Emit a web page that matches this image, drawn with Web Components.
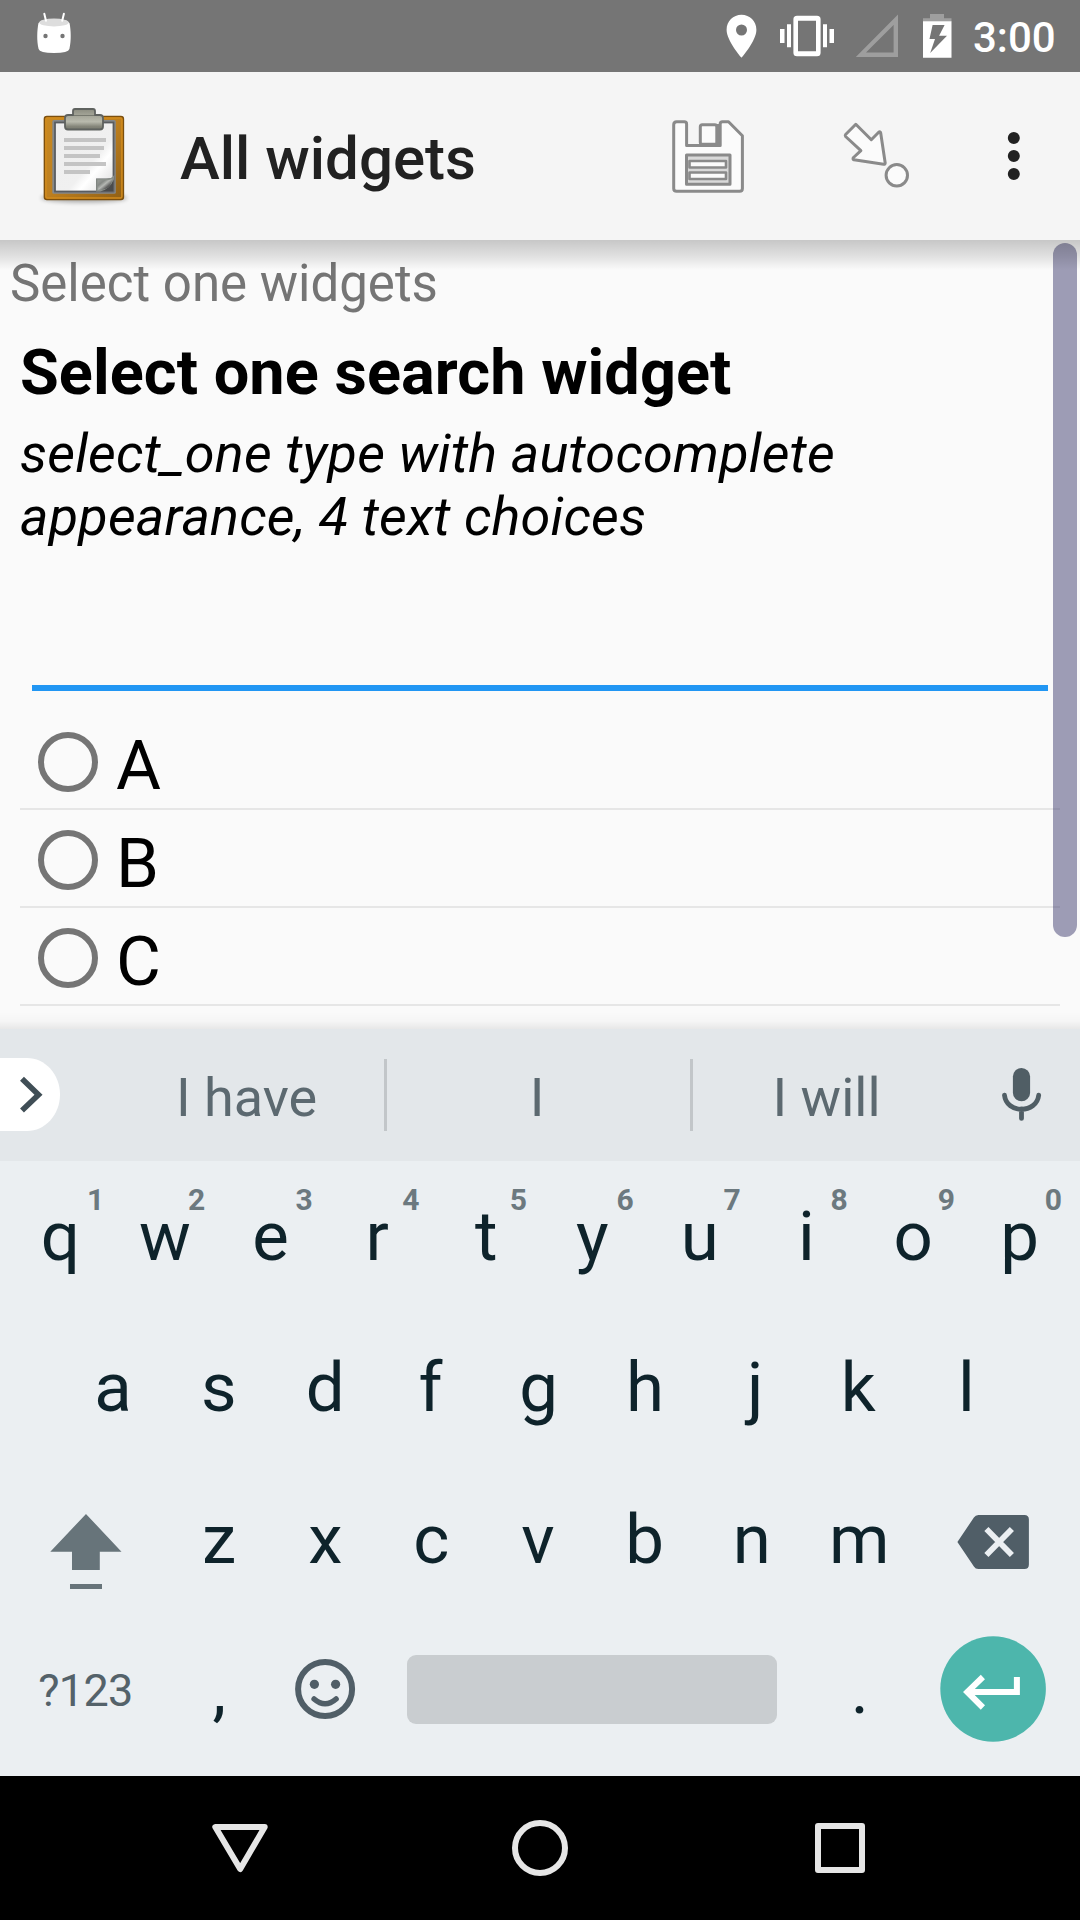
<!DOCTYPE html>
<html lang="en">
<head>
<meta charset="utf-8">
<title>All widgets</title>
<style>
html,body{margin:0;padding:0;background:#000}
body{width:1080px;height:1920px;overflow:hidden;font-family:Roboto,"Noto Sans",sans-serif}
</style>
</head>
<body>
<phone-screen>
  <status-bar slot="status" time="3:00"></status-bar>
  <app-bar slot="bar">All widgets</app-bar>
  <form-page slot="page" group="Select one widgets">
    <span slot="question">Select one search widget</span>
    <span slot="hint">select_one type with autocomplete appearance, 4 text choices</span>
    <radio-choice>A</radio-choice>
    <radio-choice>B</radio-choice>
    <radio-choice>C</radio-choice>
  </form-page>
  <suggestion-strip slot="strip">
    <span slot="first">I have</span><span slot="second">I</span><span slot="third">I will</span>
  </suggestion-strip>
  <soft-keyboard slot="keys"></soft-keyboard>
  <nav-bar slot="nav"></nav-bar>
</phone-screen>
<script>
const define = (name, html) => customElements.define(name, class extends HTMLElement {
  connectedCallback() {
    if (this.shadowRoot) return;
    const root = this.attachShadow({ mode: "open" });
    root.innerHTML = `<style>*{box-sizing:border-box}svg{display:block;flex:none}</style>` + (typeof html === "function" ? html(this) : html);
  }
});

define("phone-screen", `
<style>
:host{display:grid;grid-template-rows:72px 168px 789px 132px 615px 144px;width:1080px;height:1920px;overflow:hidden}
</style>
<slot name="status"></slot><slot name="bar"></slot><slot name="page"></slot><slot name="strip"></slot><slot name="keys"></slot><slot name="nav"></slot>`);

define("status-bar", el => `
<style>
:host{display:flex;background:#757575;color:#fff;height:72px}
.gap{flex:1}
.time{font-size:42px;font-weight:500;line-height:75px;width:107px}
</style>
<svg width="108" height="72" viewBox="0 0 108 72">
  <path d="M38.500 23C37 30 36.600 41 38.600 49Q39.500 52.900 54 52.900T69.400 49C71.400 41 71 30 69.500 23L66 20.500Q54 17.500 42 20.500Z" fill="#fff"/>
  <ellipse cx="54" cy="22.500" rx="14.800" ry="3.900" fill="#ddd"/>
  <path d="M44.300 13.700l1.700 7M63.900 13.700l-1.700 7" stroke="#fff" stroke-width="2" stroke-linecap="round"/>
  <circle cx="45.500" cy="36" r="2.200" fill="#757575"/><circle cx="62.500" cy="36" r="2.200" fill="#757575"/>
</svg>
<div class="gap"></div>
<svg width="253" height="72" viewBox="720 0 253 72">
  <path fill="#fff" fill-rule="evenodd" d="M741.500 14.800c-8.300 0-14.900 6.500-14.900 14.900 0 11.200 14.900 28 14.900 28s14.900-16.800 14.900-28c0-8.400-6.600-14.900-14.900-14.900zm0 9.700a5.500 5.500 0 1 1 0 11 5.500 5.500 0 0 1 0-11z"/>
  <path fill="#fff" fill-rule="evenodd" d="M780 29h4.500v14H780zM787 24.300h4v23h-4zM823 24.300h4v23h-4zM829.500 29h4.500v14h-4.500zM797 15.700h20a3.600 3.600 0 0 1 3.600 3.600v33.400a3.600 3.600 0 0 1-3.600 3.600h-20a3.600 3.600 0 0 1-3.600-3.600V19.300a3.600 3.600 0 0 1 3.600-3.600zm1 5v30.600h18V20.700z"/>
  <path fill="#9e9e9e" fill-rule="evenodd" d="M855.800 57L898 14.500V57zM866 52.600h27.600V25z"/>
  <path fill="#9e9e9e" d="M923 18.300h7V14h14v4.300h7.500v3.200H923z"/>
  <path fill="#fff" fill-rule="evenodd" d="M923 21.300h28.500v36.500H923zM932.600 25l-3.100 14h5.500l-4.800 14 16.800-17.300h-7.900L944.600 25z"/>
</svg>
<div class="time">${el.getAttribute("time")}</div>`);

define("app-bar", `
<style>
:host{display:flex;align-items:stretch;background:#f5f5f5;color:#212121;height:168px}
.title{width:479px;font-size:60px;font-weight:500;line-height:173px;white-space:nowrap}
</style>
<svg width="180" height="168" viewBox="0 72 180 168">
  <defs>
    <linearGradient id="board" x1="0" y1="0" x2="1" y2="1"><stop offset="0" stop-color="#c98a22"/><stop offset=".5" stop-color="#bd7f1f"/><stop offset="1" stop-color="#8f5f14"/></linearGradient>
    <linearGradient id="metal" x1="0" y1="0" x2="0" y2="1"><stop offset="0" stop-color="#8b8c80"/><stop offset=".3" stop-color="#a3a497"/><stop offset=".62" stop-color="#b9baad"/><stop offset=".85" stop-color="#85867a"/><stop offset="1" stop-color="#76776d"/></linearGradient>
    <linearGradient id="sheet" x1="0" y1="0" x2="1" y2="1"><stop offset="0" stop-color="#eee"/><stop offset=".6" stop-color="#f0f0f0"/><stop offset=".7" stop-color="#fff"/><stop offset="1" stop-color="#d8d8d8"/></linearGradient>
    <linearGradient id="curl" x1="0" y1="0" x2="1" y2="1"><stop offset="0" stop-color="#a9aca9"/><stop offset=".35" stop-color="#858985"/><stop offset=".5" stop-color="#b5b8b4"/><stop offset=".7" stop-color="#555"/></linearGradient>
    <filter id="soft" x="-20%" y="-100%" width="140%" height="300%"><feGaussianBlur stdDeviation="2"/></filter>
  </defs>
  <ellipse cx="84" cy="198" rx="43" ry="4.500" fill="#000" opacity=".3" filter="url(#soft)"/>
  <rect x="44.400" y="116.500" width="79" height="83" rx="2.500" fill="url(#board)" stroke="#7c4f0d" stroke-width="1.500"/>
  <rect x="45.900" y="118" width="76" height="80" rx="1.500" fill="none" stroke="#d18a1d" stroke-width="1.500"/>
  <rect x="52.300" y="120" width="63.500" height="73.700" rx="1.500" fill="#85888a"/>
  <rect x="55" y="122.500" width="58.500" height="69" fill="url(#sheet)" stroke="#5a5d60" stroke-width="1.800"/>
  <path d="M64 138h42v4H64zM64 146h40v4H64zM64 154h36v4H64zM64 162h42v4H64zM64 170h26v4H64z" fill="#c4c4c4"/>
  <path d="M96 178.500h11q5 0 7-2.500v16H96z" fill="#6d6f70"/>
  <path d="M97 179.500h8.500q6 0 8-2.500Q112 190 100 190.500H97z" fill="url(#curl)" stroke="#8a908a" stroke-width="1.300"/>
  <path d="M113.500 180v11.500h-13Q110 189 113.500 180z" fill="#4a4b4c"/>
  <path d="M73 115v-4q0-2 2-2h18q2 0 2 2v4h5q3 0 3 3v8.500q0 3-3 3H68q-3 0-3-3V118q0-3 3-3h5z" fill="url(#metal)" stroke="#5f625f" stroke-width="1.800"/>
  <path d="M74 115.500h20" stroke="#77796f" stroke-width="1"/>
</svg>
<div class="title"><slot></slot></div>
<svg width="421" height="168" viewBox="659 72 421 168">
  <g fill="#fbfbfb" stroke="#8a8a8a" stroke-width="3" stroke-linejoin="round">
    <path d="M676.700 121.800H684.300Q686.600 121.800 686.600 124V145.600H720.200V124Q720.200 121.800 722.500 121.800H728.500L742.400 135.800V188.500Q742.400 191.300 739.600 191.300H676.700Q673.700 191.300 673.700 188.500V124.800Q673.700 121.800 676.700 121.800Z"/>
    <path d="M718.300 124v21"/>
    <rect x="700.300" y="124.700" width="16.500" height="19.500" rx="2"/>
    <rect x="686.500" y="155" width="43.500" height="29.300" fill="#d9d9d9"/>
    <g stroke-width="2.600"><rect x="689.500" y="161" width="36.500" height="6.500"/><rect x="689.500" y="172.500" width="36.500" height="6.500"/></g>
    <path d="M855.800 124.300L871.300 139.700L878.700 132.200Q880.300 131 880.700 133L885.200 163Q885.200 164.600 883.600 164.300L854 159.800Q852.300 159 853.500 157.500L860.900 150.700L845.600 136.500Q844.900 135.300 845.600 134.500Z"/>
    <circle cx="896.800" cy="175.300" r="10.700"/>
  </g>
  <g fill="#212121"><circle cx="1013.800" cy="138" r="6"/><circle cx="1013.800" cy="156" r="6"/><circle cx="1013.800" cy="174" r="6"/></g>
</svg>`);

define("form-page", el => `
<style>
:host{display:block;position:relative;background:#fafafa;height:789px;overflow:hidden;color:#000}
.group{font-size:51px;line-height:60px;height:92px;padding:14px 0 0 10px;color:#757575;white-space:nowrap}
.body{padding:0 20px}
.question{font-size:63px;font-weight:700;line-height:74px;height:82px;padding-top:4px;letter-spacing:.06px;white-space:nowrap}
.hint{font-size:54px;font-style:italic;line-height:63px;height:144px;padding-top:8px;width:880px;letter-spacing:.18px}
.field{height:133px;margin:0 12px 21px;border-bottom:6px solid #2196f3}
.thumb{position:absolute;left:1053px;top:3px;width:24px;height:694px;border-radius:12px;background:rgba(64,62,112,.5)}
.top{position:absolute;left:0;right:0;top:0;height:30px;background:linear-gradient(rgba(0,0,0,.205),rgba(0,0,0,.10) 55%,rgba(0,0,0,0))}
.bottom{position:absolute;left:0;right:0;bottom:0;height:17px;background:linear-gradient(rgba(0,0,0,0),rgba(0,0,0,.02) 55%,rgba(0,0,0,.075))}
</style>
<div class="group">${el.getAttribute("group")}</div>
<div class="body">
  <div class="question"><slot name="question"></slot></div>
  <div class="hint"><slot name="hint"></slot></div>
  <div class="field"></div>
  <slot></slot>
</div>
<div class="thumb"></div><div class="top"></div><div class="bottom"></div>`);

define("radio-choice", `
<style>
:host{display:flex;align-items:center;box-sizing:border-box;height:98px;border-bottom:2px solid #e6e6e6;font-size:69px;line-height:84px}
i{width:60px;height:60px;border:6px solid #757575;border-radius:50%;margin:4px 18px 0}
span{padding-top:12px}
</style><i></i><span><slot></slot></span>`);

define("suggestion-strip", `
<style>
:host{display:flex;align-items:center;height:132px;background:#e3e7ea;color:#5c6970;font-size:54px}
.cell{line-height:120px;padding-top:6px;text-align:center;white-space:nowrap}
.rule{width:3px;height:72px;background:#c2c6c9}
</style>
<svg width="110" height="132" viewBox="0 1029 110 132">
  <path d="M0 1058H27C45 1058 60 1074 60 1094.500S45 1131 27 1131H0z" fill="#fff"/>
  <path d="M22 1078.700L38.500 1094.700L22 1110.500" fill="none" stroke="#404e56" stroke-width="5.600"/>
</svg>
<div class="cell" style="width:274px;padding-right:1px">
<slot name="first"></slot></div><div class="rule"></div>
<div class="cell" style="width:303px;padding-right:3px"><slot name="second"></slot></div><div class="rule"></div>
<div class="cell" style="width:267px"><slot name="third"></slot></div>
<svg width="120" height="132" viewBox="960 1029 120 132">
  <rect x="1012.900" y="1068" width="17.200" height="33.300" rx="8.600" fill="#505e65"/>
  <path d="M1004.500 1095.200C1006.500 1114 1036.500 1114 1038.700 1095.200M1021.500 1109v9.400" fill="none" stroke="#505e65" stroke-width="4.800" stroke-linecap="round"/>
</svg>`);

define("key-cap", el => `
<style>
:host{display:block;position:relative;flex:none;width:106.6px;height:100%;text-align:center;text-indent:${2 * (el.getAttribute("nudge") || 0)}px;font-size:69px;line-height:152px;color:#0e232b}
b{position:absolute;right:${14 - (el.getAttribute("alt-nudge") || 0)}px;top:21px;text-indent:0;font-size:30px;line-height:36px;color:#6c797f}
</style><slot></slot>${el.hasAttribute("alt") ? `<b>${el.getAttribute("alt")}</b>` : ""}`);

/* Optical offsets, in pixels, of each letter and each corner digit inside its key. */
const nudge = { w: -2, e: -3, r: -3, t: -0.5, y: -1, a: -0.5, s: -1.5, d: -1.5, f: -3, g: -1.5, h: -1.5, j: 2, k: -1.5, z: -1, x: -1.5, c: -2, v: -2, b: -2, n: -1.5, m: -0.5, ",": -1 };
const altNudge = { 1: 4.5, 2: -1, 5: 1, 6: 1, 7: 1.5, 8: 2, 9: 2.5, 0: 3 };
const caps = (letters, digits = "") => [...letters].map((c, i) =>
  `<key-cap nudge="${nudge[c] || 0}"${digits[i] ? ` alt="${digits[i]}" alt-nudge="${altNudge[digits[i]] || 0}"` : ""}>${c}</key-cap>`).join("");

define("soft-keyboard", `
<style>
:host{display:grid;grid-template-rows:151px 152px 151px 161px;height:615px;background:#ebeff2}
.row{display:flex;justify-content:center}
.low key-cap{line-height:149px}
.mode{width:159.9px;text-align:center;font-size:45px;letter-spacing:-.7px;line-height:151px;color:#54626a;flex:none;padding-right:3px}
.space{width:370px;height:69px;border-radius:9px;background:#c9cdd0;margin:40px 29.600px 0 26.800px;flex:none}
</style>
<div class="row">${caps("qwertyuiop", "1234567890")}</div>
<div class="row">${caps("asdfghjkl")}</div>
<div class="row">
  <svg width="159.900" height="151" viewBox="7 1464 159.900 151">
    <path fill="#67747a" d="M86 1514L121.500 1551.700H99.800V1570H72V1551.700H50.300zM70 1584h32v5H70z"/>
  </svg>
  ${caps("zxcvbnm")}
  <svg width="159.900" height="151" viewBox="913.100 1464 159.900 151">
    <path fill="#505e67" d="M978.500 1515H1024.500Q1029 1515 1029 1519.500V1564.500Q1029 1569 1024.500 1569H978.500Q975.500 1569 974 1566.500L957.500 1542L974 1517.500Q975.500 1515 978.500 1515z"/>
    <path d="M986.500 1529l25.500 26M1012 1529l-25.500 26" stroke="#ebeff2" stroke-width="5.800"/>
  </svg>
</div>
<div class="row low">
  <div class="mode">?123</div>
  ${caps(",")}
  <svg width="106.600" height="161" viewBox="273.900 1615 106.600 161">
    <g fill="none" stroke="#505e67"><circle cx="325" cy="1689" r="27" stroke-width="6"/><path d="M314 1699q11 9.500 22 0" stroke-width="5.500" stroke-linecap="round"/></g>
    <circle cx="314.300" cy="1684.300" r="4.600" fill="#505e67"/><circle cx="335.500" cy="1684.300" r="4.600" fill="#505e67"/>
  </svg>
  <div class="space"></div>
  ${caps(".")}
  <svg width="159.900" height="161" viewBox="913.100 1615 159.900 161">
    <circle cx="993.200" cy="1689" r="52.800" fill="#4db6ac"/>
    <path d="M983 1677L967.400 1692L983 1707.500M967 1692H1017V1677" fill="none" stroke="#fff" stroke-width="6"/>
  </svg>
</div>`);

define("nav-bar", `
<style>:host{display:flex;justify-content:center;gap:156px;align-items:center;height:144px;background:#000}svg{fill:none;stroke:#e6e6e6;stroke-width:6;stroke-linejoin:round}</style>
<svg width="144" height="144" viewBox="168 1776 144 144"><path d="M215.300 1827H264.700L240.200 1869z"/></svg>
<svg width="144" height="144" viewBox="468 1776 144 144"><circle cx="540" cy="1848" r="25"/></svg>
<svg width="144" height="144" viewBox="768 1776 144 144"><rect x="818" y="1826" width="44" height="44"/></svg>`);
</script>
</body>
</html>
